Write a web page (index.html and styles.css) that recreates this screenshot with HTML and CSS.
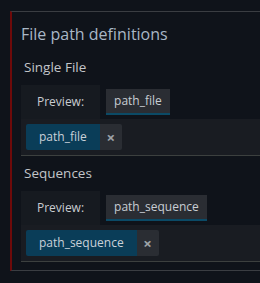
FILE: index.html
```html
<!DOCTYPE html>
<html lang="en">
<head>
    <meta charset="UTF-8">
    <meta name="viewport" content="width=device-width, initial-scale=1.0">
    <title>File path definitions</title>
    <link rel="stylesheet" href="styles.css">
</head>
<body>
    <div class="panel">
        <div class="title">File path definitions</div>

        <!-- Single file -->
        <div class="section">
            <div class="section-label">Single File</div>
            <div class="preview-row">
                <div class="preview-label">Preview:</div>
                <div class="preview-value">path_file</div>
            </div>
            <div class="tags">
                <div class="tag">
                    <span class="tag-text">path_file</span>
                    <span class="tag-remove">×</span>
                </div>
            </div>
        </div>

        <!-- Sequences -->
        <div class="section">
            <div class="section-label">Sequences</div>
            <div class="preview-row">
                <div class="preview-label">Preview:</div>
                <div class="preview-value">path_sequence</div>
            </div>
            <div class="tags">
                <div class="tag">
                    <span class="tag-text">path_sequence</span>
                    <span class="tag-remove">×</span>
                </div>
            </div>
        </div>
    </div>
</body>
</html>
```

FILE: styles.css
```css
* {
    margin: 0;
    padding: 0;
    box-sizing: border-box;
}

body {
    font-family: "Open Sans", "Noto Sans", sans-serif;
    background: #0f131a;
    padding: 11px 0 0 10px;
    overflow: hidden;
}

.panel {
    border-top: 1px solid #3a3d42;
    border-bottom: 1px solid #3a3d42;
    border-left: 2px solid #6e0a0a;
    padding: 11px 0 8px 9px;
}

.title {
    font-size: 16px;
    line-height: 22px;
    color: #a9b7c6;
    margin-bottom: 12px;
}

.section + .section {
    margin-top: 7px;
}

.section-label {
    font-size: 13.5px;
    line-height: 20px;
    color: #c2c5c9;
    padding-left: 3px;
    margin-bottom: 8px;
}

.preview-row {
    display: flex;
    align-items: flex-start;
    height: 34px;
}

.preview-label {
    height: 34px;
    line-height: 34px;
    padding: 0 16px;
    background: #161a20;
    color: #c8ccd1;
    font-size: 12px;
}

.preview-value {
    margin: 4px 0 0 6px;
    height: 26px;
    line-height: 24px;
    padding: 0 8px;
    background: #2a2d33;
    border-bottom: 2px solid #0b4a66;
    color: #c8cdd3;
    font-size: 12px;
}

.tags {
    display: flex;
    height: 37px;
    padding: 5px 5px;
    background: #191c22;
    border-bottom: 1px solid #3c403f;
}

.tag {
    display: flex;
    height: 26px;
    border-radius: 2px;
    overflow: hidden;
    font-size: 12px;
    line-height: 26px;
}

.tag-text {
    padding: 0 13px;
    background: #0a3d58;
    color: #c9d1d9;
}

.tag-remove {
    width: 22px;
    text-align: center;
    background: #2a2d33;
    color: #9ea3a8;
    font-weight: bold;
    font-size: 15px;
}
```
